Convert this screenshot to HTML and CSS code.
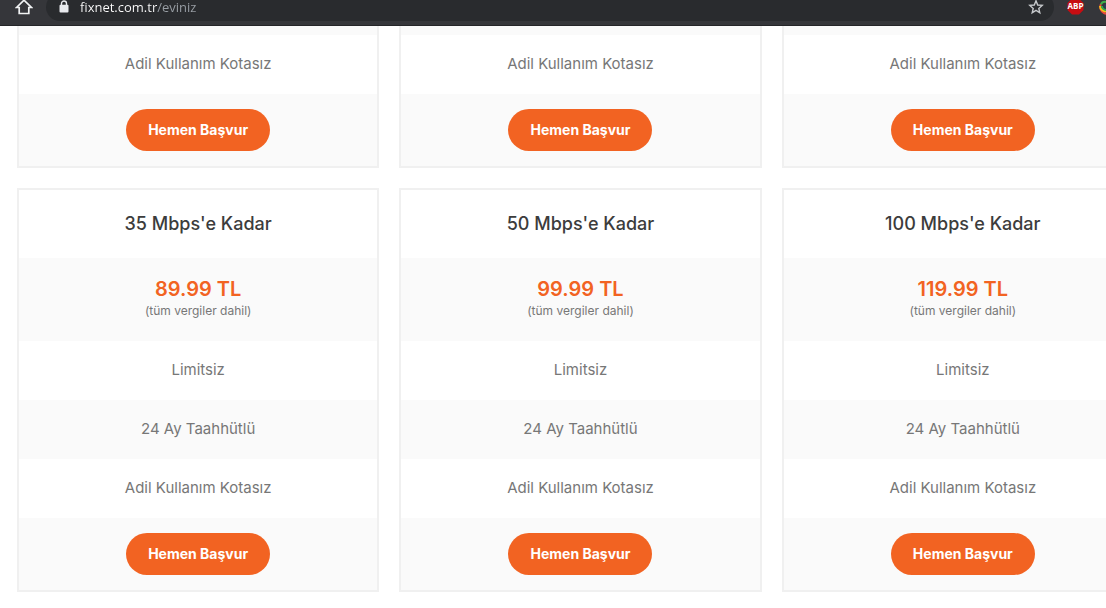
FILE: index.html
```html
<!DOCTYPE html>
<html lang="tr">
<head>
  <meta charset="utf-8">
  <title>Fixnet - Eviniz</title>
  <link rel="stylesheet" href="styles.css">
</head>
<body>
  <header class="toolbar">
    <button class="icon-btn home" type="button" aria-label="Ana sayfa">
      <svg width="18" height="16" viewBox="0 0 18 16"><path d="M1.500 8.500 9 1.200l7.500 7.300H13.800V14.500H4.200V8.500Z" fill="none" stroke="#f1f3f4" stroke-width="1.700"/></svg>
    </button>
    <div class="omnibox">
      <svg width="10" height="13" viewBox="0 0 10 13"><path d="M2.500 5V3.500a2.500 2.500 0 0 1 5 0V5" fill="none" stroke="#e8eaed" stroke-width="1.400"/><rect x="0.500" y="4.700" width="9" height="7.800" rx="1" fill="#e8eaed"/></svg>
      <input class="url" type="text" value="fixnet.com.tr/eviniz" aria-label="Adres">
      <button class="icon-btn" type="button" aria-label="Yer imi ekle">
        <svg width="16" height="16" viewBox="0 0 16 16"><path d="M8 1.800 9.700 6l4.500.4-3.400 3 1 4.400L8 11.400l-3.800 2.400 1-4.400-3.400-3L6.300 6Z" fill="none" stroke="#c6c9cc" stroke-width="1.400"/></svg>
      </button>
    </div>
    <button class="icon-btn" type="button" aria-label="ABP">
      <svg width="17" height="17" viewBox="0 0 17 17"><path d="M5 .5h7L16.500 5v7L12 16.500H5L.5 12V5Z" fill="#c70d12"/><text class="abp" x="8.500" y="11">ABP</text></svg>
    </button>
    <button class="icon-btn" type="button" aria-label="Uzantı">
      <svg width="18" height="16" viewBox="0 0 18 16"><g fill="none" stroke-width="2"><path d="M3 5a6.500 6.500 0 0 0 12 6" stroke="#e8453c"/><path d="M2 7a7 5.500 0 0 0 14 0" stroke="#f2c21a"/><path d="M4 7a4 3.500 0 0 0 9 0" stroke="#2fa84f"/><path d="M3 5.500C4 3 6 2.500 8 3" stroke="#3fae49"/></g><circle cx="8" cy="7" r="2" fill="#24435c"/></svg>
    </button>
  </header>

  <main class="plans">
    <!-- üst sıra -->
    <article class="plan plan-cut">
      <ul>
        <li class="rest"></li>
        <li>Adil Kullanım Kotasız</li>
        <li class="action"><button class="apply" type="button">Hemen Başvur</button></li>
      </ul>
    </article>
    <article class="plan plan-cut">
      <ul>
        <li class="rest"></li>
        <li>Adil Kullanım Kotasız</li>
        <li class="action"><button class="apply" type="button">Hemen Başvur</button></li>
      </ul>
    </article>
    <article class="plan plan-cut">
      <ul>
        <li class="rest"></li>
        <li>Adil Kullanım Kotasız</li>
        <li class="action"><button class="apply" type="button">Hemen Başvur</button></li>
      </ul>
    </article>

    <!-- alt sıra -->
    <article class="plan">
      <h3>35 Mbps'e Kadar</h3>
      <ul>
        <li class="price"><strong>89.99 TL</strong><small>(tüm vergiler dahil)</small></li>
        <li>Limitsiz</li>
        <li>24 Ay Taahhütlü</li>
        <li>Adil Kullanım Kotasız</li>
        <li class="action"><button class="apply" type="button">Hemen Başvur</button></li>
      </ul>
    </article>
    <article class="plan">
      <h3>50 Mbps'e Kadar</h3>
      <ul>
        <li class="price"><strong>99.99 TL</strong><small>(tüm vergiler dahil)</small></li>
        <li>Limitsiz</li>
        <li>24 Ay Taahhütlü</li>
        <li>Adil Kullanım Kotasız</li>
        <li class="action"><button class="apply" type="button">Hemen Başvur</button></li>
      </ul>
    </article>
    <article class="plan">
      <h3>100 Mbps'e Kadar</h3>
      <ul>
        <li class="price"><strong>119.99 TL</strong><small>(tüm vergiler dahil)</small></li>
        <li>Limitsiz</li>
        <li>24 Ay Taahhütlü</li>
        <li>Adil Kullanım Kotasız</li>
        <li class="action"><button class="apply" type="button">Hemen Başvur</button></li>
      </ul>
    </article>
  </main>
</body>
</html>
```
FILE: styles.css
```css
* {
  box-sizing: border-box;
}

body {
  margin: 0;
  background-color: #fff;
  color: #777;
  font-family: Inter, "Open Sans", sans-serif;
  font-size: 15px;
  overflow-x: hidden;
}

/* Tarayıcı çubuğu */
.toolbar {
  display: flex;
  align-items: center;
  height: 26px;
  margin-right: -10px;
  padding: 0 0 12px 15px;
  background-color: #35363a;
  border-bottom: 1px solid #242528;
  overflow: hidden;
}

.icon-btn {
  display: flex;
  flex: none;
  padding: 0;
  border: none;
  background: none;
  cursor: pointer;
}

.home {
  margin-right: 13px;
}

.omnibox {
  display: flex;
  flex: 1;
  align-items: center;
  height: 28px;
  margin-right: 13px;
  padding: 0 10px 0 13px;
  border-radius: 14px;
  background-color: #292b2e;
}

.url {
  flex: 1;
  min-width: 0;
  padding: 0 0 0 11px;
  border: none;
  outline: none;
  font-family: "Open Sans", sans-serif;
  font-size: 13px;
  line-height: 20px;
  color: transparent;
  background: linear-gradient(90deg, #fff 88px, #9aa0a6 88px);
  -webkit-background-clip: text;
  background-clip: text;
}

.toolbar .icon-btn + .icon-btn {
  margin-left: 14px;
}

.abp {
  font-family: "Open Sans", sans-serif;
  font-size: 8px;
  font-weight: bold;
  fill: #fff;
  text-anchor: middle;
}

/* Paketler */
.plans {
  display: grid;
  grid-template-columns: repeat(3, 1fr);
  gap: 20px;
  margin: 0 -38px 16px 17px;
}

.plan {
  border: 2px solid #f0f0f0;
  text-align: center;
}

.plan-cut {
  border-top: none;
}

.plan h3 {
  margin: 0;
  padding: 22px 0;
  color: #3c3c3c;
  font-size: 18px;
  font-weight: 500;
  line-height: 24px;
}

.plan ul {
  margin: 0;
  padding: 0;
  list-style: none;
}

.plan li {
  padding: 19px 0 20px;
  line-height: 20px;
}

.plan li:nth-child(odd) {
  background-color: #fafafa;
}

.plan .rest {
  height: 9px;
  padding: 0;
}

.plan .price {
  padding: 19px 0 20px;
}

.price strong,
.price small {
  display: block;
}

.price strong {
  color: #f26322;
  font-size: 20px;
  font-weight: 600;
  line-height: 24px;
}

.price small {
  font-size: 12px;
}

.plan .action {
  padding: 15px 0;
  background-color: #fafafa;
}

.apply {
  display: block;
  margin: 0 auto;
  padding: 11px 22px;
  border: none;
  border-radius: 21px;
  background-color: #f26322;
  color: #fff;
  font-family: inherit;
  font-size: 14px;
  font-weight: 700;
  line-height: 20px;
  cursor: pointer;
}
```
